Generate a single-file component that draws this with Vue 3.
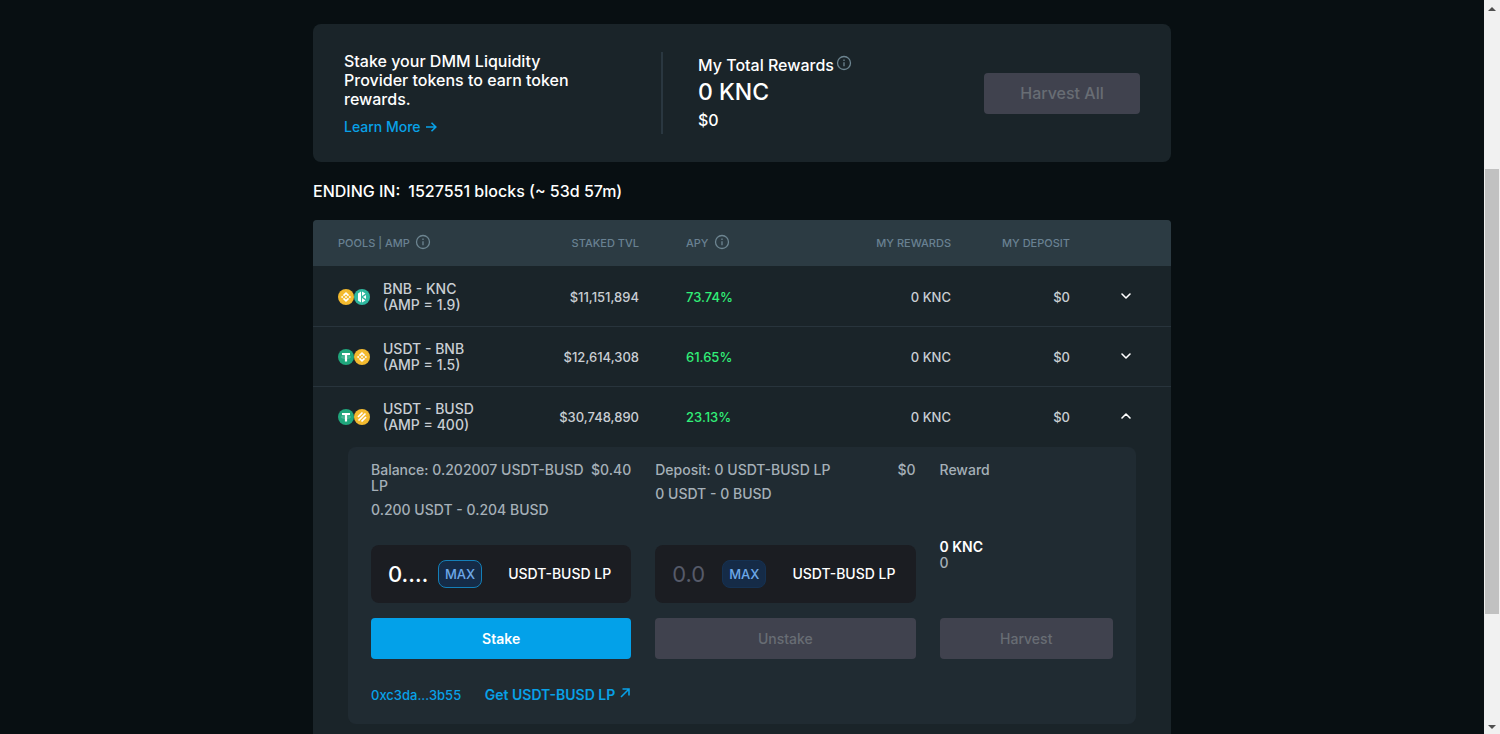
<script setup>
import { ref } from 'vue'

const stakeAmount = ref('0.202007')
const unstakeAmount = ref('')

const pools = [
  { name: 'BNB - KNC', amp: '1.9', tokens: ['bnb', 'knc'], tvl: '$11,151,894', apy: '73.74%', rewards: '0 KNC', deposit: '$0', open: false },
  { name: 'USDT - BNB', amp: '1.5', tokens: ['usdt', 'bnb'], tvl: '$12,614,308', apy: '61.65%', rewards: '0 KNC', deposit: '$0', open: false },
  { name: 'USDT - BUSD', amp: '400', tokens: ['usdt', 'busd'], tvl: '$30,748,890', apy: '23.13%', rewards: '0 KNC', deposit: '$0', open: true },
]
</script>

<template>
  <div class="app">
    <svg class="defs" aria-hidden="true">
      <symbol id="info" viewBox="0 0 16 16">
        <circle cx="8" cy="8" r="6.5" fill="none" stroke="currentColor" stroke-width="1.3" />
        <path d="M8 7.2v4M8 4.6v1.3" fill="none" stroke="currentColor" stroke-width="1.3" />
      </symbol>
      <symbol id="bnb" viewBox="0 0 32 32">
        <circle cx="16" cy="16" r="16" fill="#f3ba2f" />
        <path fill="#fff" d="M12.1 14.4 16 10.5l3.9 3.9 2.3-2.3L16 6l-6.2 6.2zM6 16l2.3-2.3 2.2 2.3-2.2 2.3zM12.1 17.6 16 21.5l3.9-3.9 2.3 2.3L16 26l-6.2-6.2zM21.5 16l2.2-2.3L26 16l-2.3 2.3zM18.3 16 16 18.3 13.7 16l2.3-2.3z" />
      </symbol>
      <symbol id="knc" viewBox="0 0 32 32">
        <circle cx="16" cy="16" r="16" fill="#2fb8a0" />
        <path fill="#fff" d="M14 5v22l-6-4V9zM16 14V5l7 4zM16 18v9l7-4zM18 16l6-4v8z" />
      </symbol>
      <symbol id="usdt" viewBox="0 0 32 32">
        <circle cx="16" cy="16" r="16" fill="#20a67c" />
        <path fill="none" stroke="#fff" stroke-width="4.4" d="M8 10h16M16 10v15" />
        <ellipse cx="16" cy="16" rx="9" ry="2.4" fill="none" stroke="#fff" stroke-width="1" opacity=".6" />
      </symbol>
      <symbol id="busd" viewBox="0 0 32 32">
        <circle cx="16" cy="16" r="16" fill="#f3ba2f" />
        <path fill="none" stroke="#fff" stroke-width="3.4" d="m8 16 9-9M9 23 23 9M15 25l9-9" />
      </symbol>
      <symbol id="chevron" viewBox="0 0 12 12">
        <path d="m2 4 4 4 4-4" fill="none" stroke="currentColor" stroke-width="1.6" stroke-linecap="round" stroke-linejoin="round" />
      </symbol>
    </svg>

    <main class="page">
      <section class="summary">
        <div class="intro">
          <p class="lead">Stake your DMM Liquidity Provider tokens to earn token rewards.</p>
          <a class="more" href="#">Learn More
            <svg class="arrow" viewBox="0 0 12 12"><path d="M1 6h10M6.5 1.8 10.8 6 6.5 10.2" /></svg>
          </a>
        </div>
        <div class="total">
          <div class="total-label">My Total Rewards <svg class="info"><use href="#info" /></svg></div>
          <div class="total-amount">0 KNC</div>
          <div class="total-usd">$0</div>
        </div>
        <button class="btn harvest-all" disabled>Harvest All</button>
      </section>

      <h2 class="ending"><span>ENDING IN:</span><span>1527551 blocks (~ 53d 57m)</span></h2>

      <div class="pools">
        <table>
          <colgroup>
            <col /><col class="c-tvl" /><col class="c-apy" /><col class="c-rewards" /><col class="c-deposit" /><col class="c-toggle" />
          </colgroup>
          <thead>
            <tr>
              <th class="first"><span class="head">POOLS | AMP <svg class="info"><use href="#info" /></svg></span></th>
              <th class="num">STAKED TVL</th>
              <th class="apy-cell"><span class="head">APY <svg class="info"><use href="#info" /></svg></span></th>
              <th class="num">MY REWARDS</th>
              <th class="num">MY DEPOSIT</th>
              <th></th>
            </tr>
          </thead>
          <tbody>
            <tr v-for="pool in pools" :key="pool.name" class="pool">
              <td class="first">
                <div class="pair">
                  <span class="tokens">
                    <svg v-for="token in pool.tokens" :key="token"><use :href="'#' + token" /></svg>
                  </span>
                  <span>{{ pool.name }}<br />(AMP = {{ pool.amp }})</span>
                </div>
              </td>
              <td class="num">{{ pool.tvl }}</td>
              <td class="apy-cell apy">{{ pool.apy }}</td>
              <td class="num">{{ pool.rewards }}</td>
              <td class="num">{{ pool.deposit }}</td>
              <td class="toggle-cell">
                <button class="toggle" :class="{ open: pool.open }" :aria-expanded="pool.open" :aria-label="'Details of ' + pool.name">
                  <svg><use href="#chevron" /></svg>
                </button>
              </td>
            </tr>
          </tbody>
        </table>

        <div class="details">
          <div class="column">
            <div class="holding"><span>Balance: 0.202007 USDT-BUSD LP</span><span>$0.40</span></div>
            <div class="split">0.200 USDT - 0.204 BUSD</div>
            <div class="form">
              <div class="field">
                <input id="stake" v-model="stakeAmount" placeholder="0.0" />
                <button class="max active">MAX</button>
                <label for="stake">USDT-BUSD LP</label>
              </div>
              <button class="btn primary">Stake</button>
            </div>
          </div>
          <div class="column">
            <div class="holding"><span>Deposit: 0 USDT-BUSD LP</span><span>$0</span></div>
            <div class="split">0 USDT - 0 BUSD</div>
            <div class="form">
              <div class="field">
                <input id="unstake" v-model="unstakeAmount" placeholder="0.0" />
                <button class="max">MAX</button>
                <label for="unstake">USDT-BUSD LP</label>
              </div>
              <button class="btn" disabled>Unstake</button>
            </div>
          </div>
          <div class="column">
            <div>Reward</div>
            <div class="reward"><strong>0 KNC</strong><span>0</span></div>
            <button class="btn harvest" disabled>Harvest</button>
          </div>
          <div class="links">
            <a href="#" class="address">0xc3da...3b55</a>
            <a href="#" class="get">Get USDT-BUSD LP
              <svg class="arrow" viewBox="0 0 12 12"><path d="M2 10 10 2M3.5 2H10v6.5" /></svg>
            </a>
          </div>
        </div>
      </div>
    </main>

    <div class="scrollbar" aria-hidden="true">
      <svg viewBox="0 0 8 4"><path d="M4 0l4 4H0z" /></svg>
      <div class="track"><div class="thumb"></div></div>
      <svg viewBox="0 0 8 4"><path d="M0 0h8L4 4z" /></svg>
    </div>
  </div>
</template>

<style>
body {
  margin: 0;
  background: #080f12;
}
</style>

<style scoped>
* {
  box-sizing: border-box;
}
.app {
  display: flex;
  height: 100vh;
  overflow: hidden;
  background: #080f12;
  color: #fff;
  font: 500 14px/16px Inter, "Open Sans", sans-serif;
}
.defs {
  position: absolute;
  width: 0;
  height: 0;
}
button,
input {
  font: inherit;
  border: 0;
  margin: 0;
}
a {
  color: #08a1e7;
  text-decoration: none;
}
.page {
  flex: 1;
  display: flex;
  flex-direction: column;
  max-width: 858px;
  margin: 0 auto;
  padding-top: 24px;
}
.info {
  width: 16px;
  height: 16px;
  color: #6d8591;
}
.arrow {
  width: 12px;
  height: 12px;
  fill: none;
  stroke: currentColor;
  stroke-width: 1.6;
}

/* Summary card */
.summary {
  display: flex;
  align-items: center;
  padding: 28px 31px;
  background: #1a2429;
  border-radius: 8px;
}
.intro {
  flex: 0 0 319px;
  padding-right: 80px;
  border-right: 2px solid #2a3740;
}
.lead {
  margin: 0 0 10px;
  font-size: 16px;
  line-height: 19px;
}
.more {
  display: flex;
  align-items: center;
  gap: 4px;
  line-height: 15px;
}
.total {
  flex: 1;
  padding-left: 35px;
}
.total-label {
  display: flex;
  align-items: flex-start;
  gap: 2px;
  font-size: 16px;
  line-height: 20px;
}
.total-amount {
  font-size: 23px;
  line-height: 34px;
}
.total-usd {
  font-size: 16px;
  line-height: 22px;
}
.btn {
  height: 41px;
  padding: 0;
  border-radius: 4px;
  background: #40424e;
  color: #686d74;
}
.btn.primary {
  background: #03a1e9;
  color: #fff;
  font-weight: 600;
}
.harvest-all {
  width: 156px;
  font-size: 16px;
}
.ending {
  display: flex;
  gap: 8px;
  margin: 0;
  padding: 19px 0;
  font-size: 16px;
  font-weight: 500;
  line-height: 20px;
}

/* Pool table */
.pools {
  flex: 1;
  background: #1a2429;
  border-radius: 4px 4px 0 0;
}
table {
  width: 100%;
  margin-bottom: 1px;
  table-layout: fixed;
  border-collapse: collapse;
}
.c-tvl {
  width: 119px;
}
.c-apy {
  width: 161px;
}
.c-rewards {
  width: 151px;
}
.c-deposit {
  width: 119px;
}
.c-toggle {
  width: 101px;
}
th,
td {
  padding: 0;
  text-align: left;
}
th {
  height: 46px;
  background: #2c3b43;
  color: #698192;
  font-size: 11px;
  font-weight: 500;
}
th:first-child {
  border-top-left-radius: 4px;
}
th:last-child {
  border-top-right-radius: 4px;
}
.head {
  display: flex;
  align-items: flex-start;
  gap: 5px;
  line-height: 18px;
}
.first {
  padding-left: 25px;
}
.num {
  text-align: right;
}
.apy-cell {
  padding-left: 47px;
}
.pool td {
  height: 60px;
  padding-top: 2px;
  color: #c9ced3;
  font-size: 13px;
}
.pool td.first {
  font-size: 14px;
}
.pool + .pool td {
  border-top: 1px solid #28343c;
}
.pool td.apy {
  color: #31ef78;
}
.pair {
  display: flex;
  align-items: center;
  gap: 13px;
}
.tokens {
  display: flex;
}
.tokens svg {
  width: 16px;
  height: 16px;
}
.pool .toggle-cell {
  padding: 0 0 0 50px;
}
.toggle {
  display: flex;
  padding: 0;
  background: none;
  color: #fff;
}
.toggle svg {
  width: 12px;
  height: 12px;
}
.toggle.open {
  transform: rotate(180deg);
}

/* Expanded pool */
.details {
  display: grid;
  grid-template-columns: 3fr 3fr 2fr;
  gap: 28px 24px;
  margin: 0 35px;
  padding: 15px 23px 21px;
  background: #202b32;
  border-radius: 8px;
  color: #a5b0b8;
}
.column {
  display: flex;
  flex-direction: column;
  min-width: 0;
}
.holding {
  display: flex;
  justify-content: space-between;
  gap: 4px;
  margin-bottom: 8px;
}
.form {
  display: flex;
  flex-direction: column;
  gap: 15px;
  margin-top: auto;
  padding-top: 27px;
}
.field {
  display: flex;
  align-items: center;
  gap: 8px;
  height: 58px;
  padding: 0 20px 0 17px;
  background: #1b1d22;
  border-radius: 8px;
}
.field input {
  width: 42px;
  padding: 0;
  background: none;
  color: #fff;
  font-size: 22px;
  line-height: 28px;
  text-overflow: ellipsis;
  outline: none;
}
.field input::placeholder {
  color: #565a69;
  font-weight: 400;
  opacity: 1;
}
.field label {
  margin-left: auto;
  color: #fff;
}
.max {
  width: 44px;
  height: 28px;
  padding: 0;
  border: 1px solid #153253;
  border-radius: 8px;
  background: #152b47;
  color: #6da8e8;
  font-size: 13px;
}
.max.active {
  border-color: #147fb8;
}
.reward {
  display: flex;
  flex-direction: column;
  margin-top: 61px;
}
.reward strong {
  color: #fff;
  font-weight: 600;
}
.harvest {
  margin-top: auto;
}
.links {
  display: flex;
  justify-content: space-between;
  white-space: nowrap;
}
.address {
  font-size: 13px;
}
.get {
  display: flex;
  gap: 4px;
  font-weight: 600;
}

/* Page scrollbar */
.scrollbar {
  display: flex;
  flex-direction: column;
  align-items: center;
  width: 16px;
  padding: 7px 0 5px;
  background: #f1f1f1;
}
.scrollbar svg {
  width: 8px;
  height: 4px;
  fill: #505050;
}
.track {
  flex: 1;
  width: 14px;
  padding-top: 158px;
}
.thumb {
  height: 80%;
  background: #c1c1c1;
}
</style>
